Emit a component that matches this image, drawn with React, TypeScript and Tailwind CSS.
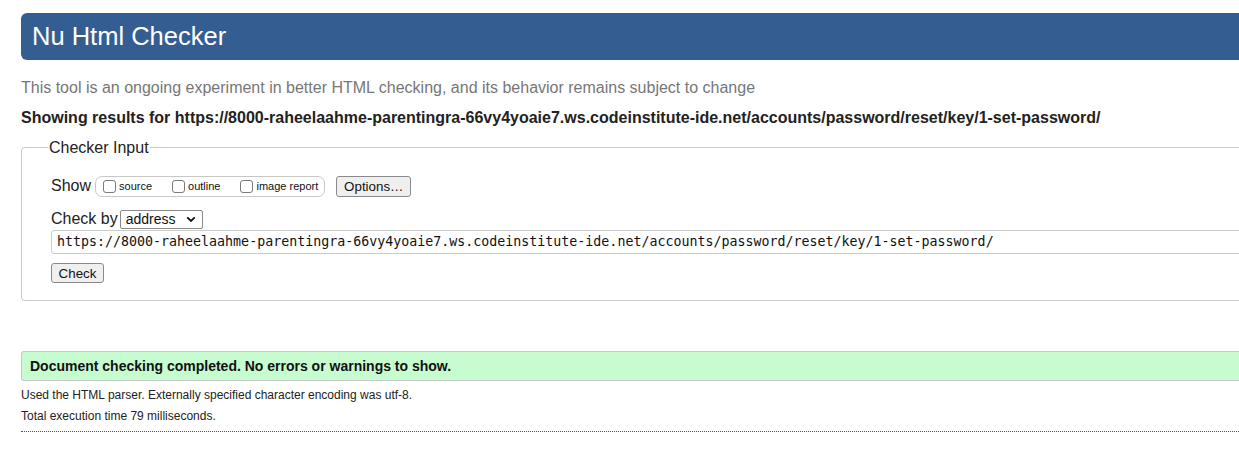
const URL =
  'https://8000-raheelaahme-parentingra-66vy4yoaie7.ws.codeinstitute-ide.net/accounts/password/reset/key/1-set-password/';

function ShowOptions() {
  const opts = ['source', 'outline', 'image report'];
  return (
    <span className="inline-flex items-center h-[21px] ml-[4px] pl-[7px] pr-[6px] border border-[#c8c8c8] rounded-[7px] gap-[20px]">
      {opts.map((o) => (
        <label key={o} className="inline-flex items-center text-[11px] text-[#111]">
          <span className="inline-block w-[13px] h-[13px] border border-[#7a7a7a] rounded-[3px] bg-white mr-[3px]" />
          {o}
        </label>
      ))}
    </span>
  );
}

export default function App() {
  return (
    <div className="w-[1239px] h-[461px] overflow-hidden bg-white font-['Liberation_Sans',Arial,sans-serif] text-[#222]">
      <div className="ml-[21px] w-[1300px]">
        {/* header */}
        <div className="mt-[13px] h-[47px] bg-[#345e92] rounded-l-[6px] flex items-center pl-[11px]">
          <h1 className="text-[25.5px] text-white leading-none">Nu Html Checker</h1>
        </div>

        <p className="mt-[18px] text-[16px] leading-[19px] text-[#777]">
          This tool is an ongoing experiment in better HTML checking, and its behavior remains subject to change
        </p>
        <p className="mt-[11px] text-[16px] leading-[19px] font-bold text-[#222]">
          Showing results for {URL}
        </p>

        {/* checker input */}
        <fieldset className="mt-[11px] border border-[#cbcbcb] rounded-[4px] h-[163px] pl-[29px] pr-0">
          <legend className="ml-[-3px] px-[1px] text-[16px] leading-[19px] text-[#222]">Checker Input</legend>

          <div className="mt-[18px] flex items-center h-[22px]">
            <span className="text-[16px]">Show</span>
            <ShowOptions />
            <button className="ml-[11px] h-[21px] w-[75px] text-[13.33px] text-[#111] bg-[#efefef] border border-[#8a8a8a] rounded-[3px]">
              Options…
            </button>
          </div>

          <div className="mt-[12px] flex items-center h-[20px]">
            <span className="text-[16px]">Check by</span>
            <span className="ml-[2px] w-[83px] h-[19px] border border-[#8a8a8a] rounded-[2px] flex items-center justify-between px-[5px] text-[14px] text-[#111] bg-white">
              address
              <svg width="10" height="7" viewBox="0 0 10 7" className="mr-[1px]">
                <path d="M1.2 1.3 L5 5 L8.8 1.3" fill="none" stroke="#111" strokeWidth="1.8" />
              </svg>
            </span>
          </div>

          <div className="mt-[1px] h-[24px] border border-[#cbcbcb] rounded-l-[3px] flex items-center pl-[5px] font-['DejaVu_Sans_Mono',monospace] text-[13.3px] text-[#111] whitespace-nowrap">
            {URL}
          </div>

          <button className="mt-[9px] h-[20px] w-[53px] text-[13.33px] text-[#111] bg-[#efefef] border border-[#8a8a8a] rounded-[3px]">
            Check
          </button>
        </fieldset>

        {/* results */}
        <div className="mt-[50px] h-[30px] bg-[#c6fcd0] border-y border-l border-[#c8c8c8] rounded-l-[3px] flex items-center pl-[8px]">
          <span className="text-[14px] font-bold text-[#111]">Document checking completed. No errors or warnings to show.</span>
        </div>
        <p className="mt-[7px] text-[12px] leading-[14px] text-[#222]">
          Used the HTML parser. Externally specified character encoding was utf-8.
        </p>
        <p className="mt-[7px] text-[12px] leading-[14px] text-[#222]">Total execution time 79 milliseconds.</p>
        <div className="mt-[8px] border-t border-dotted border-[#555]" />
      </div>
    </div>
  );
}
